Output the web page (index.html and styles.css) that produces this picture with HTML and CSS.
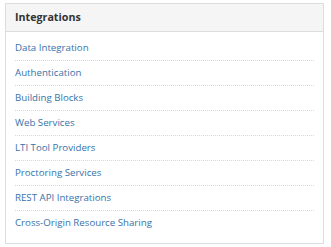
FILE: index.html
```html
<!DOCTYPE html>
<html lang="en">

<head>
    <meta charset="UTF-8">
    <meta name="viewport" content="width=device-width, initial-scale=1.0">
    <title>Integrations</title>
    <link rel="stylesheet" href="styles.css">
</head>

<body>
    <div class="panel">
        <div class="panel-heading">Integrations</div>
        <ul class="links">
            <li><a href="#">Data Integration</a></li>
            <li><a href="#">Authentication</a></li>
            <li><a href="#">Building Blocks</a></li>
            <li><a href="#">Web Services</a></li>
            <li><a href="#">LTI Tool Providers</a></li>
            <li><a href="#">Proctoring Services</a></li>
            <li><a href="#">REST API Integrations</a></li>
            <li><a href="#">Cross-Origin Resource Sharing</a></li>
        </ul>
    </div>
</body>

</html>
```

FILE: styles.css
```css
body {
    font-family: "Open Sans", Arial, sans-serif;
    margin: 0;
    padding: 3px 7px 0 5px;
    background-color: #fff;
}

.panel {
    border: 1px solid #ddd;
    background-color: #fff;
    box-sizing: border-box;
    height: 241px;
}

.panel-heading {
    background-color: #f5f5f5;
    border-bottom: 1px solid #ddd;
    height: 27px;
    line-height: 27px;
    padding: 0 9px;
    font-size: 10.7px;
    font-weight: bold;
    color: #333;
}

.links {
    list-style: none;
    margin: 0;
    padding: 4px 9px 0 9px;
}

.links li {
    height: 24px;
    line-height: 24px;
    border-bottom: 1px dotted #d8d8d8;
    font-size: 9.7px;
}

.links li:last-child {
    border-bottom: none;
}

.links a {
    color: #3672aa;
    text-decoration: none;
}
```
